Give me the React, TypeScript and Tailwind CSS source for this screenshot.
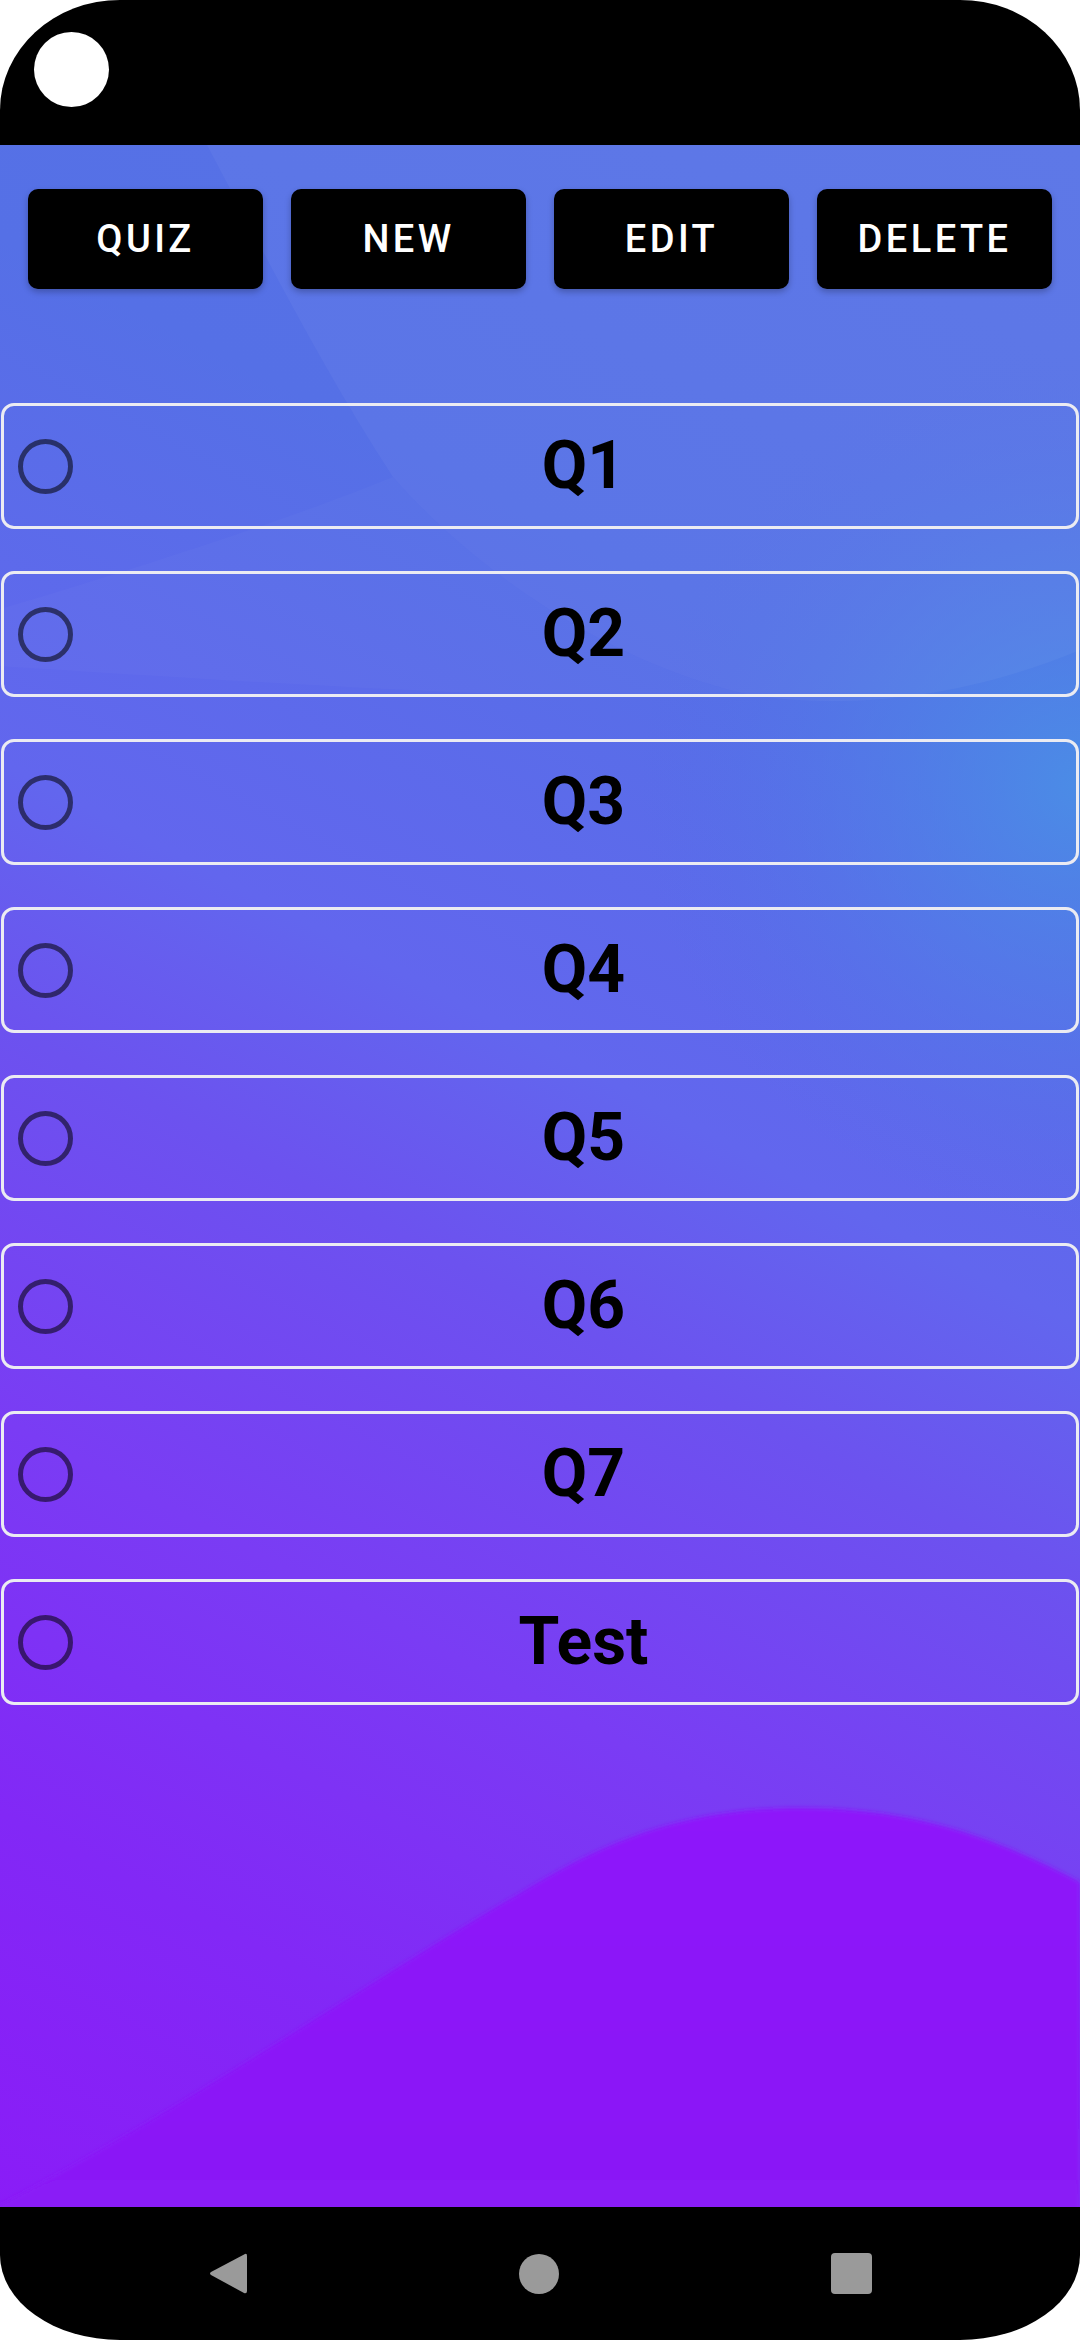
import React from "react";

const rows = ["Q1", "Q2", "Q3", "Q4", "Q5", "Q6", "Q7", "Test"];
const buttons = ["QUIZ", "NEW", "EDIT", "DELETE"];

function Background() {
  return (
    <svg
      className="absolute inset-0 w-full h-full"
      viewBox="0 0 1080 2062"
      preserveAspectRatio="none"
      aria-hidden="true"
    >
      <defs>
        <linearGradient id="base" x1="1080" y1="0" x2="0" y2="2062" gradientUnits="userSpaceOnUse">
          <stop offset="0" stopColor="#5873e6" />
          <stop offset="0.25" stopColor="#5570e6" />
          <stop offset="0.45" stopColor="#6266ee" />
          <stop offset="0.55" stopColor="#6c52ef" />
          <stop offset="0.7" stopColor="#7a3cf4" />
          <stop offset="0.85" stopColor="#8228f6" />
          <stop offset="1" stopColor="#8a1cf7" />
        </linearGradient>
        <radialGradient id="glow" cx="1080" cy="640" r="440" gradientUnits="userSpaceOnUse">
          <stop offset="0" stopColor="#4a8fe6" stopOpacity="0.9" />
          <stop offset="0.5" stopColor="#4d85e7" stopOpacity="0.4" />
          <stop offset="1" stopColor="#5070e6" stopOpacity="0" />
        </radialGradient>
        <linearGradient id="wave" x1="0" y1="1660" x2="0" y2="2062" gradientUnits="userSpaceOnUse">
          <stop offset="0" stopColor="#8e16fa" />
          <stop offset="1" stopColor="#8a1af6" />
        </linearGradient>
        <filter id="soft" x="-5%" y="-5%" width="110%" height="110%">
          <feGaussianBlur stdDeviation="2" />
        </filter>
      </defs>
      <rect x="0" y="0" width="1080" height="2062" fill="url(#base)" />
      <rect x="0" y="0" width="1080" height="2062" fill="url(#glow)" />
      <path
        d="M207,0 L1080,0 L1080,505 C960,555 840,565 746,549 C600,515 470,420 393,332 C320,220 260,100 207,0 Z"
        fill="#ffffff"
        fillOpacity="0.04"
      />
      <path
        d="M-20,470 C150,420 300,370 393,332 C470,420 600,515 746,549 C600,560 300,540 -20,520 Z"
        fill="#ffffff"
        fillOpacity="0.025"
      />
      <path
        d="M0,2060 C200,1955 400,1815 560,1725 C650,1675 730,1663 800,1663 C920,1663 1000,1695 1080,1737 L1080,2070 L0,2070 Z"
        fill="url(#wave)"
        filter="url(#soft)"
      />
    </svg>
  );
}

export default function App() {
  return (
    <div className="min-h-screen bg-white font-['Roboto',_'Liberation_Sans',_sans-serif]">
      <div className="relative w-[1080px] h-[2340px] bg-black rounded-t-[120px_110px] rounded-b-[120px_85px] overflow-hidden flex flex-col">
        {/* status bar */}
        <div className="h-[145px] shrink-0 pl-[34px] pt-[32px]">
          <div className="w-[75px] h-[75px] rounded-full bg-white" />
        </div>

        {/* content */}
        <main className="relative flex-1 overflow-hidden">
          <Background />
          <div className="relative flex flex-col">
            <div className="grid grid-cols-4 gap-[28px] px-[28px] pt-[44px]">
              {buttons.map((b) => (
                <button
                  key={b}
                  className="h-[100px] rounded-[10px] bg-black text-white text-[38px] font-medium tracking-[0.09em] leading-none shadow-[0_3px_6px_rgba(0,0,0,0.25)] flex items-center justify-center"
                >
                  {b}
                </button>
              ))}
            </div>

            <div className="mt-[114px] flex flex-col gap-[42px] px-[1px]">
              {rows.map((r) => (
                <div
                  key={r}
                  className="h-[126px] rounded-[13px] border-[3px] border-[#ebebf2] flex items-center pl-[14px]"
                >
                  <div className="w-[55px] h-[55px] rounded-full border-[5px] border-black/55 shrink-0" />
                  <div className="flex-1 text-center text-[66px] font-bold text-black leading-none pl-[18px]">
                    {r}
                  </div>
                </div>
              ))}
            </div>
          </div>
        </main>

        {/* nav bar */}
        <div className="h-[133px] shrink-0 flex items-center justify-center gap-[272px]">
          <svg width="38" height="43" viewBox="0 0 38 43" aria-hidden="true">
            <path
              d="M36,2 Q38,1 38,4 L38,39 Q38,42 35,41 L2,23 Q0,21.5 2,20 Z"
              fill="#9a9a9a"
            />
          </svg>
          <div className="w-[40px] h-[40px] rounded-full bg-[#9a9a9a]" />
          <div className="w-[41px] h-[41px] rounded-[4px] bg-[#9a9a9a]" />
        </div>
      </div>
    </div>
  );
}
